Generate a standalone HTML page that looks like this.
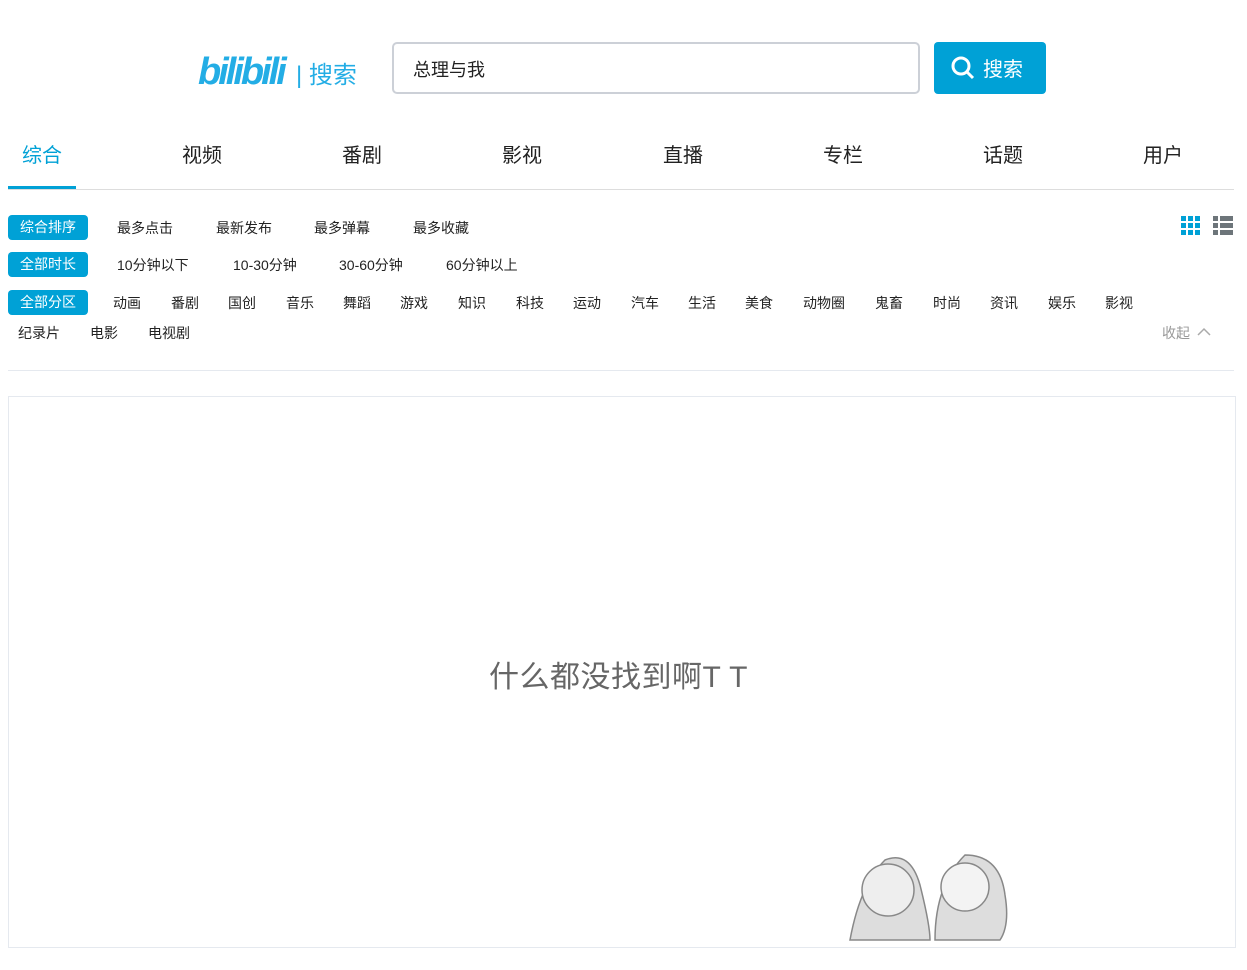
<!DOCTYPE html>
<html><head><meta charset="utf-8"><style>
body{margin:0;width:1247px;height:970px;background:#fff;font-family:"Liberation Sans","Noto Sans CJK SC",sans-serif;position:relative;overflow:hidden;color:#222}
.a{position:absolute;white-space:nowrap}
.t{font-size:20px;color:#222;top:139px}
.f{font-size:14px;color:#222}
.p{background:#00a1d6;color:#fff;border-radius:4px;height:25px;line-height:25px;width:80px;text-align:center;left:8px;font-size:14px}
</style></head><body>
<div class="a" style="left:198px;top:50px;font-size:38px;font-weight:bold;color:#23ade5;letter-spacing:-3px;font-style:italic;line-height:44px">bilibili</div>
<div class="a" style="left:296px;top:60px;font-size:24px;color:#23ade5;line-height:32px">| 搜索</div>
<div class="a" style="left:392px;top:42px;width:524px;height:48px;border:2px solid #ccd0d7;border-radius:5px"></div>
<div class="a" style="left:413px;top:56px;font-size:18px;color:#222">总理与我</div>
<div class="a" style="left:934px;top:42px;width:112px;height:52px;background:#00a1d6;border-radius:4px"></div>
<svg class="a" style="left:950px;top:55px" width="26" height="26"><circle cx="11" cy="11" r="8" stroke="#fff" stroke-width="3" fill="none"/><line x1="17" y1="17" x2="23" y2="23" stroke="#fff" stroke-width="3"/></svg>
<div class="a" style="left:983px;top:53px;font-size:20px;color:#fff">搜索</div>
<div class="a t" style="left:22px;color:#00a1d6">综合</div>
<div class="a" style="left:8px;top:186px;width:68px;height:3px;background:#00a1d6"></div>
<div class="a t" style="left:182px">视频</div><div class="a t" style="left:342px">番剧</div><div class="a t" style="left:502px">影视</div><div class="a t" style="left:663px">直播</div><div class="a t" style="left:823px">专栏</div><div class="a t" style="left:983px">话题</div><div class="a t" style="left:1143px">用户</div>
<div class="a" style="left:8px;top:189px;width:1226px;height:1px;background:#ddd"></div>
<div class="a p" style="top:215px">综合排序</div>
<div class="a f" style="left:117px;top:218px">最多点击</div><div class="a f" style="left:216px;top:218px">最新发布</div><div class="a f" style="left:314px;top:218px">最多弹幕</div><div class="a f" style="left:413px;top:218px">最多收藏</div>
<div class="a p" style="top:252px">全部时长</div>
<div class="a f" style="left:117px;top:255px">10分钟以下</div><div class="a f" style="left:233px;top:255px">10-30分钟</div><div class="a f" style="left:339px;top:255px">30-60分钟</div><div class="a f" style="left:446px;top:255px">60分钟以上</div>
<div class="a p" style="top:290px">全部分区</div>
<div class="a f" style="left:113px;top:293px">动画</div><div class="a f" style="left:171px;top:293px">番剧</div><div class="a f" style="left:228px;top:293px">国创</div><div class="a f" style="left:286px;top:293px">音乐</div><div class="a f" style="left:343px;top:293px">舞蹈</div><div class="a f" style="left:400px;top:293px">游戏</div><div class="a f" style="left:458px;top:293px">知识</div><div class="a f" style="left:516px;top:293px">科技</div><div class="a f" style="left:573px;top:293px">运动</div><div class="a f" style="left:631px;top:293px">汽车</div><div class="a f" style="left:688px;top:293px">生活</div><div class="a f" style="left:745px;top:293px">美食</div><div class="a f" style="left:803px;top:293px">动物圈</div><div class="a f" style="left:875px;top:293px">鬼畜</div><div class="a f" style="left:933px;top:293px">时尚</div><div class="a f" style="left:990px;top:293px">资讯</div><div class="a f" style="left:1048px;top:293px">娱乐</div><div class="a f" style="left:1105px;top:293px">影视</div>
<div class="a f" style="left:18px;top:323px">纪录片</div><div class="a f" style="left:90px;top:323px">电影</div><div class="a f" style="left:148px;top:323px">电视剧</div>
<div class="a f" style="left:1162px;top:323px;color:#999">收起</div>
<svg class="a" style="left:1196px;top:326px" width="16" height="12"><path d="M2 9 L8 3 L14 9" stroke="#aaa" stroke-width="1.5" fill="none"/></svg>
<svg class="a" style="left:1180px;top:215px" width="56" height="22"><g fill="#00a1d6"><rect x="1" y="1" width="5" height="5"/><rect x="8" y="1" width="5" height="5"/><rect x="15" y="1" width="5" height="5"/><rect x="1" y="8" width="5" height="5"/><rect x="8" y="8" width="5" height="5"/><rect x="15" y="8" width="5" height="5"/><rect x="1" y="15" width="5" height="5"/><rect x="8" y="15" width="5" height="5"/><rect x="15" y="15" width="5" height="5"/></g><g fill="#6d757a"><rect x="33" y="1" width="5" height="5"/><rect x="40" y="1" width="13" height="5"/><rect x="33" y="8" width="5" height="5"/><rect x="40" y="8" width="13" height="5"/><rect x="33" y="15" width="5" height="5"/><rect x="40" y="15" width="13" height="5"/></g></svg>
<div class="a" style="left:8px;top:370px;width:1226px;height:1px;background:#e5e9ef"></div>
<div class="a" style="left:8px;top:396px;width:1226px;height:550px;border:1px solid #e5e9ef"></div>
<div class="a" style="left:489px;top:652px;font-size:30px;color:#666;letter-spacing:0.5px">什么都没找到啊T T</div>
<svg class="a" style="left:840px;top:845px" width="180" height="101"><g fill="#ddd" stroke="#888" stroke-width="1.5"><path d="M10 95 Q20 40 45 15 Q70 5 80 40 Q90 80 90 95 Z"/><circle cx="48" cy="45" r="26" fill="#eee"/><path d="M95 95 Q95 40 125 10 Q160 10 165 50 Q170 80 160 95 Z"/><circle cx="125" cy="42" r="24" fill="#f3f3f3"/></g></svg>
</body></html>
